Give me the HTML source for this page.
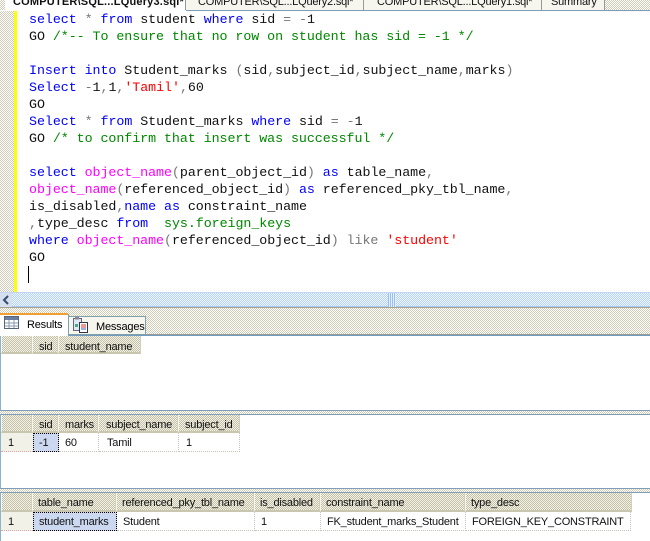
<!DOCTYPE html>
<html><head><meta charset="utf-8">
<style>
html,body{margin:0;padding:0;background:#fff}
#p{position:relative;width:650px;height:541px;overflow:hidden;background:#fff}
#p div{position:absolute}
.d{background:repeating-conic-gradient(#cfcbb4 0 25%,#fff 0 50%) 0 0/2px 2px}
.c{font:13.33px/17px "Liberation Mono",monospace;color:#111;white-space:pre;left:29px;letter-spacing:-.06px}
.c i{font-style:normal}
.k{color:#00f}.g{color:#080}.r{color:#f00}.m{color:#f0f}.n{color:#777}
.s{font:11px/14px "Liberation Sans",sans-serif;color:#111;white-space:pre;letter-spacing:-.2px}
.h{background:repeating-conic-gradient(#c4c0a6 0 25%,#f4f3ea 0 50%) 0 0/2px 2px;border-right:1px solid #d2cfbc;border-left:1px solid #f6f5ee;border-bottom:2px solid #c9c6b0;box-sizing:border-box}
.b{box-sizing:border-box;border-right:1px dotted #c4c4b8;border-bottom:1px dotted #c4c4b8}
.l{background:#7f9db9;height:1px;left:0;width:650px}
</style></head><body><div id="p">

<!-- tab strip -->
<div class="d" style="left:0;top:0;width:650px;height:10px"></div>
<div style="left:185px;top:0;width:464px;height:10px;background:#f6f5ee"></div>
<div class="d" style="left:604px;top:0;width:46px;height:10px"></div>
<div style="left:5px;top:0;width:180px;height:11px;background:#fff"></div>
<div style="left:185px;top:0;width:1px;height:10px;background:#8a99a8"></div>
<div style="left:363px;top:0;width:1px;height:10px;background:#999"></div>
<div style="left:541px;top:0;width:1px;height:10px;background:#999"></div>
<div style="left:604px;top:0;width:1px;height:10px;background:#999"></div>
<div style="left:186px;top:10px;width:464px;height:1px;background:#7f9db9"></div>
<div class="s" style="left:13px;top:-5px;font-weight:bold;letter-spacing:.2px">COMPUTER\SQL...LQuery3.sql*</div>
<div class="s" style="left:198px;top:-5px">COMPUTER\SQL...LQuery2.sql*</div>
<div class="s" style="left:377px;top:-5px">COMPUTER\SQL...LQuery1.sql*</div>
<div class="s" style="left:551px;top:-5px">Summary</div>

<!-- gutter -->
<div class="d" style="left:0;top:11px;width:14px;height:281px"></div>
<div style="left:14px;top:11px;width:3px;height:281px;background:#ff0"></div>

<!-- code -->
<div class="c" style="top:12px"><i class="k">select</i> <i class="n">*</i> <i class="k">from</i> student <i class="k">where</i> sid <i class="n">=</i> <i class="n">-</i>1</div>
<div class="c" style="top:29px">GO <i class="g">/*-- To ensure that no row on student has sid = -1 */</i></div>
<div class="c" style="top:63px"><i class="k">Insert</i> <i class="k">into</i> Student_marks <i class="n">(</i>sid<i class="n">,</i>subject_id<i class="n">,</i>subject_name<i class="n">,</i>marks<i class="n">)</i></div>
<div class="c" style="top:80px"><i class="k">Select</i> <i class="n">-</i>1<i class="n">,</i>1<i class="n">,</i><i class="r">'Tamil'</i><i class="n">,</i>60</div>
<div class="c" style="top:97px">GO</div>
<div class="c" style="top:114px"><i class="k">Select</i> <i class="n">*</i> <i class="k">from</i> Student_marks <i class="k">where</i> sid <i class="n">=</i> <i class="n">-</i>1</div>
<div class="c" style="top:131px">GO <i class="g">/* to confirm that insert was successful */</i></div>
<div class="c" style="top:165px"><i class="k">select</i> <i class="m">object_name</i><i class="n">(</i>parent_object_id<i class="n">)</i> <i class="k">as</i> table_name<i class="n">,</i></div>
<div class="c" style="top:182px"><i class="m">object_name</i><i class="n">(</i>referenced_object_id<i class="n">)</i> <i class="k">as</i> referenced_pky_tbl_name<i class="n">,</i></div>
<div class="c" style="top:199px">is_disabled<i class="n">,</i><i class="k">name</i> <i class="k">as</i> constraint_name</div>
<div class="c" style="top:216px"><i class="n">,</i>type_desc <i class="k">from</i>  <i class="g">sys.foreign_keys</i></div>
<div class="c" style="top:233px"><i class="k">where</i> <i class="m">object_name</i><i class="n">(</i>referenced_object_id<i class="n">)</i> <i class="n">like</i> <i class="r">'student'</i></div>
<div class="c" style="top:250px">GO</div>
<div style="left:28px;top:266px;width:1px;height:17px;background:#000"></div>

<!-- scrollbar -->
<div style="left:0;top:292px;width:650px;height:15px;background:repeating-conic-gradient(#b4d4f8 0 25%,#f0f6ff 0 50%) 0 0/2px 2px"></div>
<div style="left:0;top:292px;width:650px;height:1px;background:#c4d4f4"></div>
<div style="left:0;top:306px;width:650px;height:1px;background:#a8c8f0"></div>
<div style="left:0;top:293px;width:12px;height:14px;background:#d4dff0"></div>
<svg style="position:absolute;left:2px;top:295px" width="8" height="10"><path d="M6 1L2 5l4 4" fill="none" stroke="#3a4a6a" stroke-width="2"/></svg>
<div style="left:388px;top:293px;width:8px;height:14px;background:repeating-linear-gradient(90deg,#9cc0ec 0 1px,#e4f0ff 1px 2px)"></div>

<!-- results tabs band -->
<div class="d" style="left:0;top:307px;width:650px;height:27px"></div>
<div style="left:0;top:307px;width:650px;height:1px;background:#a5a38e"></div>
<div style="left:0;top:334px;width:650px;height:1px;background:#999"></div>
<div style="left:0;top:335px;width:650px;height:1px;background:#6f9cc0"></div>

<div style="left:0;top:313px;width:68px;height:23px;background:#fff"></div>
<div style="left:0;top:313px;width:68px;height:2px;background:#f0a030"></div>
<div style="left:68px;top:314px;width:1px;height:22px;background:#7f9db9"></div>
<div style="left:69px;top:316px;width:77px;height:19px;background:#f6f5ee;border:1px solid #7fa0a8;border-left:0;box-sizing:border-box"></div>

<svg style="position:absolute;left:4px;top:316px" width="16" height="14">
<rect x="0.5" y="0.5" width="14" height="12" fill="#fff" stroke="#55667a"/>
<rect x="1" y="1" width="13" height="3" fill="#6a7fa0"/>
<path d="M5 4v8M10 4v8M1 7h13M1 10h13" stroke="#8a9ab0"/>
</svg>
<svg style="position:absolute;left:73px;top:316px" width="16" height="17">
<rect x="0.5" y="2.5" width="8" height="12" fill="#dfe8f4" stroke="#667"/>
<rect x="2" y="0.5" width="4" height="3" fill="#889"/>
<rect x="6.5" y="6.5" width="8" height="10" fill="#fff" stroke="#334"/>
<path d="M8 9h5M8 11h5" stroke="#d33"/><path d="M8 13h5" stroke="#36c"/>
<rect x="2" y="8" width="3" height="3" fill="#4a8"/>
</svg>
<div class="s" style="left:27px;top:318px;color:#000">Results</div>
<div class="s" style="left:96px;top:320px;color:#000">Messages</div>

<!-- left frame -->
<div style="left:0;top:336px;width:1px;height:205px;background:#8fb4c8"></div>

<!-- grid 1 -->
<div class="h" style="left:1px;top:336px;width:31px;height:18px"></div>
<div class="h" style="left:32px;top:336px;width:26px;height:18px"></div>
<div class="h" style="left:58px;top:336px;width:83px;height:18px"></div>
<div class="s" style="left:39px;top:340px">sid</div>
<div class="s" style="left:65px;top:340px">student_name</div>

<!-- splitter 1 -->
<div class="l" style="top:410px"></div>
<div class="d" style="left:0;top:411px;width:650px;height:3px"></div>
<div class="l" style="top:414px"></div>

<!-- grid 2 -->
<div class="h" style="left:1px;top:415px;width:31px;height:18px"></div>
<div class="h" style="left:32px;top:415px;width:26px;height:18px"></div>
<div class="h" style="left:58px;top:415px;width:40px;height:18px"></div>
<div class="h" style="left:98px;top:415px;width:80px;height:18px"></div>
<div class="h" style="left:178px;top:415px;width:62px;height:18px"></div>
<div class="s" style="left:39px;top:418px">sid</div>
<div class="s" style="left:65px;top:418px">marks</div>
<div class="s" style="left:106px;top:418px">subject_name</div>
<div class="s" style="left:185px;top:418px">subject_id</div>
<div class="h" style="left:1px;top:433px;width:32px;height:19px;border-right:0;border-left:0;border-bottom:1px dotted #d8a8a8;background:#f2f1e8"></div>
<div style="left:33px;top:433px;width:26px;height:19px;background:#ccd8f0;border:1px dotted #000;box-sizing:border-box"></div>
<div class="b" style="left:59px;top:433px;width:40px;height:19px"></div>
<div class="b" style="left:99px;top:433px;width:80px;height:19px"></div>
<div class="b" style="left:179px;top:433px;width:61px;height:19px"></div>
<div class="s" style="left:8px;top:436px">1</div>
<div class="s" style="left:39px;top:436px">-1</div>
<div class="s" style="left:65px;top:436px">60</div>
<div class="s" style="left:107px;top:436px">Tamil</div>
<div class="s" style="left:186px;top:436px">1</div>

<!-- splitter 2 -->
<div class="l" style="top:488px"></div>
<div class="d" style="left:0;top:489px;width:650px;height:3px"></div>
<div class="l" style="top:492px"></div>

<!-- grid 3 -->
<div class="h" style="left:1px;top:493px;width:31px;height:19px"></div>
<div class="h" style="left:32px;top:493px;width:84px;height:19px"></div>
<div class="h" style="left:116px;top:493px;width:138px;height:19px"></div>
<div class="h" style="left:254px;top:493px;width:66px;height:19px"></div>
<div class="h" style="left:320px;top:493px;width:145px;height:19px"></div>
<div class="h" style="left:465px;top:493px;width:167px;height:19px"></div>
<div class="s" style="left:38px;top:496px">table_name</div>
<div class="s" style="left:122px;top:496px">referenced_pky_tbl_name</div>
<div class="s" style="left:260px;top:496px">is_disabled</div>
<div class="s" style="left:326px;top:496px">constraint_name</div>
<div class="s" style="left:471px;top:496px">type_desc</div>
<div class="h" style="left:1px;top:512px;width:32px;height:19px;border-right:0;border-left:0;border-bottom:1px dotted #d8a8a8;background:#f2f1e8"></div>
<div style="left:33px;top:512px;width:84px;height:19px;background:#ccd8f0;border:1px dotted #000;box-sizing:border-box"></div>
<div class="b" style="left:117px;top:512px;width:138px;height:19px"></div>
<div class="b" style="left:255px;top:512px;width:66px;height:19px"></div>
<div class="b" style="left:321px;top:512px;width:145px;height:19px"></div>
<div class="b" style="left:466px;top:512px;width:165px;height:19px"></div>
<div class="s" style="left:8px;top:515px">1</div>
<div class="s" style="left:39px;top:515px">student_marks</div>
<div class="s" style="left:123px;top:515px">Student</div>
<div class="s" style="left:261px;top:515px">1</div>
<div class="s" style="left:327px;top:515px">FK_student_marks_Student</div>
<div class="s" style="left:472px;top:515px">FOREIGN_KEY_CONSTRAINT</div>

</div></body></html>
